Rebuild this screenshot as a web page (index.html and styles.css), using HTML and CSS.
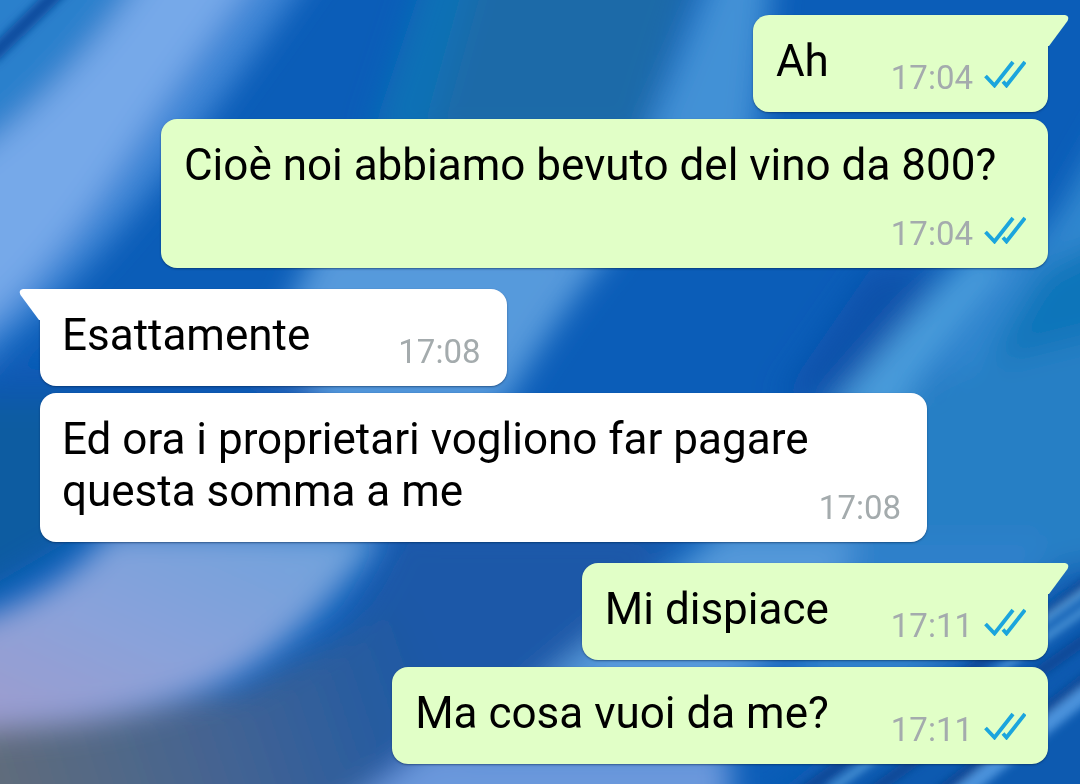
FILE: index.html
```html
<!DOCTYPE html>
<html lang="it">
<head>
<meta charset="utf-8">
<meta name="viewport" content="width=device-width, initial-scale=1">
<title>Chat</title>
<link rel="stylesheet" href="styles.css">
</head>
<body>
<svg class="wallpaper" viewBox="0 0 1080 784" preserveAspectRatio="xMidYMid slice" aria-hidden="true">
  <defs>
    <filter id="soft" x="-30%" y="-30%" width="160%" height="160%"><feGaussianBlur stdDeviation="15"/></filter>
    <filter id="fine" x="-30%" y="-30%" width="160%" height="160%"><feGaussianBlur stdDeviation="4"/></filter>
    <linearGradient id="glow" x1="0" y1="1" x2="1" y2="0">
      <stop offset="0" stop-color="#a29bcb"/><stop offset=".45" stop-color="#8aa2da"/><stop offset="1" stop-color="#6ba3dd"/>
    </linearGradient>
    <linearGradient id="dusk" gradientUnits="userSpaceOnUse" x1="0" y1="760" x2="420" y2="620">
      <stop offset="0" stop-color="#5f6c7c"/><stop offset=".5" stop-color="#426393"/><stop offset="1" stop-color="#1a58a6"/>
    </linearGradient>
  </defs>
  <rect width="1080" height="784" fill="#0b5db8"/>
  <g filter="url(#soft)">
    <path fill="#2c80cc" d="M-60-60H190L100 120L-60 300Z"/>
    <path fill="#3f86d6" d="M250-40H320Q230 90 160 180T20 330L-60 400V300Z"/>
    <path fill="#76a9e9" d="M160-50H275Q190 60 120 165T-20 330H-80V190Q60 110 160-50Z"/>
    <path fill="#0a71b6" d="M430-40H500L440 140H370Z"/>
    <path fill="#1f6aa8" d="M480-40H700L640 140H430Z"/>
    <path fill="#4291d6" d="M725-60H775L755 150H640Z"/>
    <path fill="#569adc" d="M320 240H620Q560 310 500 410H240Z"/>
    <path fill="#0a59b2" d="M-40 370H300L420 540H70L-50 610Z"/>
    <path fill="#105ba1" d="M-40 400H70V540L-50 610Z"/>
    <path fill="#3088d0" d="M1130 90V420H900L1060 210Z"/>
    <path fill="#0f74ba" d="M1120 230V420H950L1040 270Z"/>
    <path fill="#257fc5" d="M960 370L1120 330V600H640L800 450Z"/>
    <path fill="#0f51aa" d="M870 270H940L850 400H780Z"/>
    <path fill="#4a9cdb" d="M970 250H1025L890 420H820Z"/>
    <path fill="#1a59a8" d="M400 530H680L560 690L370 800H250Z"/>
    <path fill="url(#dusk)" d="M-50 700L240 690L400 600L440 690L340 830H-50Z"/>
    <path fill="#5599da" d="M720 535H920L720 700H520Z"/>
    <path fill="#2f80cb" d="M860 535H1050L960 700H780Z"/>
    <path fill="#6a98dc" d="M430 745H730L730 830H320Z"/>
    <path fill="#0b5ab0" d="M1060 570L1130 560V830H730Z"/>
  </g>
  <path fill="url(#glow)" filter="url(#soft)" d="M110 530H385Q330 610 260 660T60 725L-60 735V630Q60 600 110 530Z"/>
  <g filter="url(#fine)" fill="none" stroke-width="8">
    <path stroke="#0a4c9e" stroke-width="15" d="M-10 58L70-20"/>
    <path stroke="#0a4795" d="M1090 580L1050 612L800 794M1090 636L1045 668L860 800" stroke-width="11"/>
    <path stroke="#5aa3e0" stroke-width="6" d="M1090 606L1045 638L830 790M1090 588L1040 624"/>
    <path stroke="#0a4795" d="M1090 676L930 800" stroke-width="12"/>
    <path stroke="#4b93dc" stroke-width="16" d="M1090 690L940 810"/>
  </g>
</svg>
<svg class="symbols" aria-hidden="true">
  <symbol id="ticks" viewBox="0 0 42 28"><path d="M1.500 16L10.500 25.500L29 2M19 21.500L22.500 25.500L41 2" fill="none" stroke="#1ba5dd" stroke-width="3.800"/></symbol>
  <symbol id="tail" viewBox="0 0 22 32"><path d="M0 0H17Q22 1 19.500 6L1 31H0Z"/></symbol>
</svg>
<main class="chat">
  <section class="group sent">
    <article class="bubble"><svg class="tail"><use href="#tail"/></svg>Ah <span class="meta"><time datetime="17:04">17:04</time><svg class="ticks" role="img" aria-label="Letto"><use href="#ticks"/></svg></span></article>
    <article class="bubble">Cioè noi abbiamo bevuto del vino da 800? <span class="meta"><time datetime="17:04">17:04</time><svg class="ticks" role="img" aria-label="Letto"><use href="#ticks"/></svg></span></article>
  </section>
  <section class="group received">
    <article class="bubble"><svg class="tail"><use href="#tail"/></svg>Esattamente <span class="meta"><time datetime="17:08">17:08</time></span></article>
    <article class="bubble">Ed ora i proprietari vogliono far pagare questa somma a me <span class="meta"><time datetime="17:08">17:08</time></span></article>
  </section>
  <section class="group sent">
    <article class="bubble"><svg class="tail"><use href="#tail"/></svg>Mi dispiace <span class="meta"><time datetime="17:11">17:11</time><svg class="ticks" role="img" aria-label="Letto"><use href="#ticks"/></svg></span></article>
    <article class="bubble">Ma cosa vuoi da me? <span class="meta"><time datetime="17:11">17:11</time><svg class="ticks" role="img" aria-label="Letto"><use href="#ticks"/></svg></span></article>
  </section>
</main>
</body>
</html>
```
FILE: styles.css
```css
* { box-sizing: border-box; }
body {
  margin: 0;
  font-family: Roboto, "Liberation Sans", sans-serif;
  font-size: 44px;
  line-height: 52px;
  color: #000;
  background: #0c5eb6;
}
.wallpaper {
  position: fixed;
  inset: 0;
  z-index: -1;
  width: 100%;
  height: 100%;
}
.symbols { display: none; }
.chat {
  display: flex;
  flex-direction: column;
  gap: 21px;
  padding: 15px 32px 20px 40px;
}
.group {
  display: flex;
  flex-direction: column;
  gap: 7px;
}
.sent { align-items: flex-end; }
.received { align-items: flex-start; }
.bubble {
  position: relative;
  display: flow-root;
  max-width: 88%;
  padding: 20px 22px 14px 23px;
  border-radius: 16px;
  background: #e1ffc7;
  box-shadow: 0 1px 2px rgba(0, 30, 70, 0.5);
}
.received .bubble {
  padding-right: 26px;
  padding-left: 22px;
  background: #fff;
}
.sent .bubble:first-child { border-top-right-radius: 0; }
.received .bubble:first-child { border-top-left-radius: 0; }
.tail {
  position: absolute;
  top: 0;
  left: 100%;
  width: 22px;
  height: 32px;
  fill: #e1ffc7;
}
.received .tail {
  right: 100%;
  left: auto;
  fill: #fff;
  transform: scaleX(-1);
}
.meta {
  float: right;
  display: flex;
  gap: 11px;
  margin-left: 62px;
  padding-top: 23px;
  font-size: 33px;
  line-height: 40px;
  color: #a4abad;
}
.received .meta { margin-left: 88px; }
.ticks {
  width: 42px;
  height: 28px;
  margin-top: 2px;
}
```
